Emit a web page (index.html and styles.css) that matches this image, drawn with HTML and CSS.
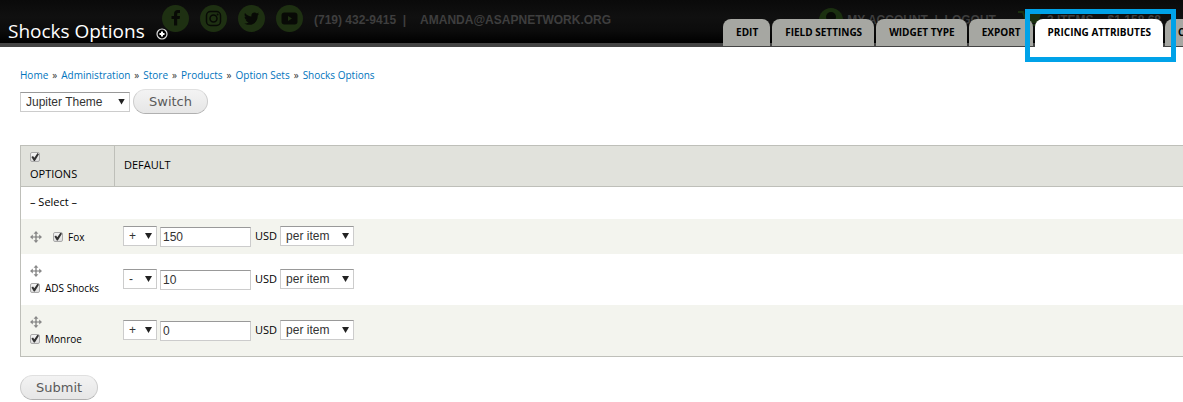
FILE: index.html
```
<!DOCTYPE html>
<html lang="en">
<head>
<meta charset="utf-8">
<title>Shocks Options</title>
<link rel="stylesheet" href="styles.css">
</head>
<body>
<svg class="defs" aria-hidden="true">
  <symbol id="move" viewBox="0 0 12 12">
    <path d="M6 1v10M1 6h10" stroke="#777" stroke-width="1.2"/>
    <path d="M6 0l2.4 2.8H3.6zM6 12l2.4-2.8H3.6zM0 6l2.8-2.4v4.8zM12 6L9.2 3.6v4.8z" fill="#888"/>
  </symbol>
</svg>
<header class="header">
  <div class="site-bar">
    <div class="contact">
      <svg class="social" viewBox="0 0 27 27"><circle cx="13.500" cy="13.500" r="13.500" fill="#1e3012"/><path d="M12 20.500v-6.500H9.500v-3H12V9c0-2.700 1.500-4 3.800-4H18v3h-1.500c-1 0-1.300.5-1.300 1.400V11H18l-.4 3h-2.400v6.500z" fill="#080a06"/></svg>
      <svg class="social" viewBox="0 0 27 27"><circle cx="13.500" cy="13.500" r="13.500" fill="#1e3012"/><g fill="none" stroke="#080a06" stroke-width="1.500"><rect x="6.500" y="6.500" width="14" height="14" rx="4"/><circle cx="13.500" cy="13.500" r="3.500"/></g><circle cx="17.600" cy="9.400" r="1" fill="#080a06"/></svg>
      <svg class="social" viewBox="0 0 27 27"><circle cx="13.500" cy="13.500" r="13.500" fill="#1e3012"/><path d="M7 8c1.800 2.200 4 3.300 6.500 3.400-.5-2.300 1-4 3-4 1 0 1.800.4 2.400 1l2-.8-1.200 1.800 1.500-.4-1.500 1.600c.2 5-3.400 9.200-8.500 9.200-1.800 0-3.500-.5-4.900-1.400 1.700.2 3.200-.3 4.400-1.200-1.400 0-2.500-.9-2.900-2.100h1.400C7.700 14.700 6.600 13.300 6.600 11.700l1.300.4C6.600 11.200 6.200 9.400 7 8z" fill="#080a06"/></svg>
      <svg class="social" viewBox="0 0 27 27"><circle cx="13.500" cy="13.500" r="13.500" fill="#1e3012"/><rect x="5.500" y="7.500" width="16" height="12" rx="3" fill="#080a06"/><path d="M12 11v5l4-2.500z" fill="#1e3012"/></svg>
      <span class="phone">(719) 432-9415 &nbsp;|</span>
      <span>AMANDA@ASAPNETWORK.ORG</span>
    </div>
    <div class="account">
      <svg class="user" viewBox="0 0 24 24"><circle cx="12" cy="12" r="12" fill="#1b3010"/><circle cx="12" cy="9" r="5" fill="#080a06"/><path d="M4 20c1-7 15-7 16 0z" fill="#080a06"/></svg>
      <span class="links">MY ACCOUNT &nbsp;|&nbsp; LOGOUT</span>
      <svg class="cart" viewBox="0 0 24 20"><path d="M0 1h5l4 13h11" fill="none" stroke="#1b3010" stroke-width="2"/><path d="M7 3h16l-3 9H9z" fill="#1b3010"/></svg>
      <span>3 ITEMS &nbsp;- $1,158.68</span>
    </div>
  </div>
  <h1 class="title">Shocks Options
    <button class="add" type="button" aria-label="Add to shortcuts"><svg viewBox="0 0 12 12"><circle cx="6" cy="6" r="5" fill="#000" stroke="#ddd" stroke-width="1.200"/><path d="M6 3.500v5M3.500 6h5" stroke="#fff" stroke-width="2"/></svg></button>
  </h1>
  <nav class="tabs">
    <a class="tab" href="#">EDIT</a>
    <a class="tab" href="#">FIELD SETTINGS</a>
    <a class="tab" href="#">WIDGET TYPE</a>
    <a class="tab" href="#">EXPORT</a>
    <a class="tab active" href="#">PRICING ATTRIBUTES</a>
    <a class="tab last" href="#">C</a>
  </nav>
</header>
<main class="content">
  <nav class="breadcrumb"><a href="#">Home</a><span>»</span><a href="#">Administration</a><span>»</span><a href="#">Store</a><span>»</span><a href="#">Products</a><span>»</span><a href="#">Option Sets</a><span>»</span><a href="#">Shocks Options</a></nav>
  <form class="theme-form">
    <span class="pick theme"><select aria-label="Theme"><option>Jupiter Theme</option></select></span>
    <button class="btn" type="button">Switch</button>
  </form>
  <form>
    <table class="options">
      <thead>
        <tr><th class="first"><label class="check-all"><input class="check" type="checkbox" checked><span>OPTIONS</span></label></th><th>DEFAULT</th></tr>
      </thead>
      <tbody>
        <tr class="none"><td colspan="2">– Select –</td></tr>
        <tr class="odd fox">
          <td><div class="option inline"><svg class="move"><use href="#move"/></svg><label><input class="check" type="checkbox" checked>Fox</label></div></td>
          <td><div class="price"><span class="pick sign"><select aria-label="Fox sign"><option>+</option></select></span><input class="amount" type="text" value="150" aria-label="Fox price"><span class="currency">USD</span><span class="pick unit"><select aria-label="Fox unit"><option>per item</option></select></span></div></td>
        </tr>
        <tr class="tall">
          <td><div class="option"><svg class="move"><use href="#move"/></svg><label><input class="check" type="checkbox" checked>ADS Shocks</label></div></td>
          <td><div class="price"><span class="pick sign"><select aria-label="ADS Shocks sign"><option>-</option></select></span><input class="amount" type="text" value="10" aria-label="ADS Shocks price"><span class="currency">USD</span><span class="pick unit"><select aria-label="ADS Shocks unit"><option>per item</option></select></span></div></td>
        </tr>
        <tr class="odd tall">
          <td><div class="option"><svg class="move"><use href="#move"/></svg><label><input class="check" type="checkbox" checked>Monroe</label></div></td>
          <td><div class="price"><span class="pick sign"><select aria-label="Monroe sign"><option>+</option></select></span><input class="amount" type="text" value="0" aria-label="Monroe price"><span class="currency">USD</span><span class="pick unit"><select aria-label="Monroe unit"><option>per item</option></select></span></div></td>
        </tr>
      </tbody>
    </table>
    <button class="btn submit" type="button">Submit</button>
  </form>
</main>
</body>
</html>
```
FILE: styles.css
```
* { box-sizing: border-box; }
body {
  margin: 0;
  background: #fff;
  color: #000;
  font: 11px/16px "Open Sans", "Noto Sans", sans-serif;
}
.defs { position: absolute; width: 0; height: 0; }
a { color: #0074bd; text-decoration: none; }

.header {
  position: relative;
  display: flex;
  justify-content: space-between;
  align-items: flex-end;
  height: 47px;
  border-bottom: 4px solid #444;
  background: linear-gradient(#0a0a0a, #101010 40%, #0c0c0c 70%, #000);
  overflow-x: clip;
}
.site-bar {
  position: absolute;
  inset: 0;
  display: flex;
  justify-content: space-between;
  padding: 5px 22px 0 162px;
  color: #3e3e3e;
  font: bold 12px/30px "Liberation Sans", Arial, sans-serif;
  white-space: nowrap;
}
.contact, .account { display: flex; align-items: flex-start; }
.social { width: 27px; height: 27px; margin-right: 11px; }
.phone { margin-right: 14px; }
.user { width: 24px; height: 24px; margin: 3px 4px 0 0; }
.cart { width: 24px; height: 20px; margin: 6px 5px 0 22px; }
.title {
  position: relative;
  display: flex;
  align-items: center;
  gap: 11px;
  margin: 0;
  padding: 0 0 0 8px;
  color: #fff;
  font-size: 19px;
  font-weight: 400;
  line-height: 24px;
  white-space: nowrap;
}
.add { width: 12px; height: 12px; margin-top: 5px; padding: 0; border: 0; background: none; }
.add svg { display: block; width: 12px; height: 12px; }

.tabs {
  position: relative;
  display: flex;
  gap: 2px;
  margin: 0 -30px -3px 0;
}
.tab {
  position: relative;
  height: 27px;
  padding: 0 12px 0 13px;
  border-radius: 8px 8px 0 0;
  background: #a6a7a2;
  color: #000;
  font-size: 10px;
  font-weight: 700;
  line-height: 27px;
  white-space: nowrap;
}
.tab.active { height: 28px; margin-bottom: -1px; background: #fff; }
.tab.active::after {
  content: "";
  position: absolute;
  inset: -10px -13px -15px -10px;
  border: 5px solid #00a2e8;
  z-index: 2;
}
.tab.last { width: 48px; }

.content { padding: 20px 0 0 20px; }
.breadcrumb { display: flex; gap: 4px; color: #333; font-size: 10px; line-height: 16px; }
.theme-form { display: flex; align-items: center; gap: 3px; margin: 6px 0 31px; }

.pick { position: relative; display: inline-flex; }
.pick select {
  appearance: none;
  width: 100%;
  height: 20px;
  margin: 0;
  padding: 0 5px;
  border: 1px solid #ccc;
  border-top-color: #999;
  border-radius: 0;
  background: #fff;
  color: #333;
  font: 12px/18px "Liberation Sans", Arial, sans-serif;
}
.pick::after {
  content: "";
  position: absolute;
  top: 7px;
  right: 5px;
  width: 7px;
  height: 6px;
  background: #222;
  clip-path: polygon(0 0, 100% 0, 50% 100%);
  pointer-events: none;
}
.theme { width: 110px; }
.sign { width: 34px; }
.unit { width: 74px; }
.btn {
  display: block;
  height: 25px;
  padding: 0 15px;
  border: 1px solid #ccc;
  border-top-color: #e0e0e0;
  border-bottom-color: #b0b0b0;
  border-radius: 13px;
  background: linear-gradient(#f3f3f3, #e6e6e6);
  color: #5a5a5a;
  font: 13px/22px "DejaVu Sans", Verdana, sans-serif;
}
.submit { margin-top: 18px; }

.options {
  width: 100%;
  border-collapse: separate;
  border-spacing: 0;
  border: solid #bebfb9;
  border-width: 1px 0 1px 1px;
}
.options th {
  height: 41px;
  padding: 0 9px;
  border-bottom: 1px solid #bebfb9;
  background: #e1e2dc;
  font-weight: 400;
  text-align: left;
}
.options .first { width: 94px; padding-top: 2px; border-right: 1px solid #bebfb9; }
.options td { padding: 0 9px; }
.options th:not(.first) { padding-bottom: 2px; }
.options td:last-child:not(:first-child) { padding-left: 8px; }
.check-all { display: flex; flex-direction: column; }
.check-all span { line-height: 16px; margin-top: 4px; }
.options .none td { height: 32px; padding-bottom: 2px; }
.fox td { height: 35px; }
.tall td { height: 51px; }
.odd { background: #f3f4ee; }
.check {
  appearance: none;
  flex: none;
  position: relative;
  width: 10px;
  height: 10px;
  margin: 0;
  border: 1px solid #aaa;
  border-radius: 2px;
  background: linear-gradient(#f4f4f4, #dedede);
}
.check:checked::before {
  content: "";
  position: absolute;
  inset: 0;
  background: #333;
  clip-path: polygon(5% 50%, 25% 38%, 42% 58%, 82% 0, 100% 15%, 48% 100%, 36% 100%);
}
.option { display: flex; flex-direction: column; gap: 4px; font-size: 10px; line-height: 14px; }
.option label { display: flex; align-items: center; gap: 5px; white-space: nowrap; }
.option.inline { flex-direction: row; align-items: center; gap: 11px; }
.move { width: 12px; height: 12px; }
.price { display: flex; align-items: flex-start; gap: 3px; }
.currency { margin-left: 1px; line-height: 20px; }
.amount {
  width: 91px;
  height: 20px;
  margin: 1px 0 0;
  padding: 0 2px;
  border: 1px solid #ccc;
  border-top-color: #999;
  background: #fff;
  color: #333;
  font: 12px/18px "Liberation Sans", Arial, sans-serif;
}
```
